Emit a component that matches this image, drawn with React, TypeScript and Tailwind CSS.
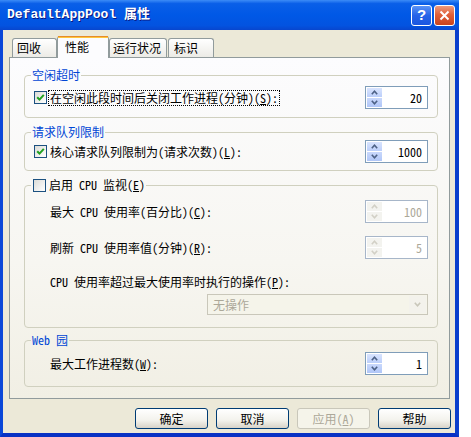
import type { ReactNode } from "react";

// ── XP Luna palette ─────────────────────────────────────────────────────────
const GROUP_LABEL = "text-[#0046D5]";

function CheckBox({ checked }: { checked?: boolean }) {
  return (
    <span className="flex h-[13px] w-[13px] shrink-0 items-center justify-center border border-[#1C5180] bg-[linear-gradient(135deg,#DCDCD7_0%,#FFFFFF_100%)]">
      {checked && (
        <svg width="9" height="9" viewBox="0 0 9 9">
          <path d="M1.2 4.2 L3.5 6.6 L7.8 1.8" fill="none" stroke="#21A121" strokeWidth="2" />
        </svg>
      )}
    </span>
  );
}

function Arrow({ up, color }: { up?: boolean; color: string }) {
  return (
    <svg width="7" height="5" viewBox="0 0 7 5">
      <path d={up ? "M0.8 4.2 L3.5 1.2 L6.2 4.2" : "M0.8 0.8 L3.5 3.8 L6.2 0.8"} fill="none" stroke={color} strokeWidth="1.6" />
    </svg>
  );
}

function Spinner({ value, disabled }: { value: string; disabled?: boolean }) {
  return (
    <div
      className={
        disabled
          ? "ml-auto flex h-[23px] w-[63px] shrink-0 border border-[#A7B6C9] bg-white p-[1px] text-[#ACA899]"
          : "ml-auto flex h-[23px] w-[63px] shrink-0 border border-[#7F9DB9] bg-white p-[1px] text-black"
      }
    >
      <div className="flex w-[15px] flex-col gap-[1px]">
        <div className={disabled ? "flex flex-1 items-center justify-center bg-[#F3F3EF]" : "flex flex-1 items-center justify-center bg-[linear-gradient(180deg,#D9E4FE_0%,#BCCFFA_100%)]"}>
          <Arrow up color={disabled ? "#D2D0C6" : "#4D6185"} />
        </div>
        <div className={disabled ? "flex flex-1 items-center justify-center bg-[#F3F3EF]" : "flex flex-1 items-center justify-center bg-[linear-gradient(180deg,#C9D8FC_0%,#B0C6F7_100%)]"}>
          <Arrow color={disabled ? "#D2D0C6" : "#4D6185"} />
        </div>
      </div>
      <div className="flex-1 pr-[4px] text-right leading-[19px]">{value}</div>
    </div>
  );
}

function Group({ legend, className, children }: { legend: ReactNode; className: string; children: ReactNode }) {
  return (
    <fieldset className={`ml-[14px] w-[414px] rounded-[4px] border border-[#D0D0BF] px-[9px] ${className}`}>
      <legend className="-ml-[3px] px-[1px] leading-[14px]">{legend}</legend>
      {children}
    </fieldset>
  );
}

function Button({ children, disabled }: { children: ReactNode; disabled?: boolean }) {
  return (
    <button
      className={
        disabled
          ? "flex h-[21px] w-[73px] items-center justify-center rounded-[3px] border border-[#C9C7BA] bg-[#F5F4EA] text-[#ACA899]"
          : "flex h-[21px] w-[73px] items-center justify-center rounded-[3px] border border-[#003C74] bg-[linear-gradient(180deg,#FFFFFF_0%,#F3F2EC_60%,#D8D3C8_100%)] text-black"
      }
    >
      {children}
    </button>
  );
}

export default function App() {
  return (
    <div className="flex h-[437px] w-[471px] bg-white font-['Noto_Sans_Mono_CJK_SC','Noto_Sans_CJK_SC',sans-serif] text-[12px] text-black">
      <div className="flex w-[459px] flex-col">
        {/* ── Title bar ── */}
        <div className="flex h-[30px] shrink-0 items-center bg-[linear-gradient(180deg,#3C8CF7_0%,#0A5FE8_12%,#0058E6_50%,#0353E0_85%,#0846CE_100%)] pl-[7px] pr-[4px]">
          <span className="font-['Liberation_Mono','Noto_Sans_CJK_SC',monospace] text-[13px] font-bold text-white [text-shadow:1px_1px_#0A1883]">
            DefaultAppPool 属性
          </span>
          <div className="ml-auto flex gap-[2px]">
            <div className="flex h-[21px] w-[21px] items-center justify-center rounded-[3px] border border-white bg-[linear-gradient(180deg,#5A93F6_0%,#2563E8_50%,#1A56E0_100%)] font-['Liberation_Sans',sans-serif] text-[15px] font-bold text-white">
              ?
            </div>
            <div className="flex h-[21px] w-[21px] items-center justify-center rounded-[3px] border border-white bg-[linear-gradient(180deg,#EE9A7C_0%,#E0603A_45%,#C8421C_100%)]">
              <svg width="11" height="11" viewBox="0 0 11 11">
                <path d="M1.5 1.5 L9.5 9.5 M9.5 1.5 L1.5 9.5" stroke="white" strokeWidth="2" />
              </svg>
            </div>
          </div>
        </div>

        {/* ── Dialog body ── */}
        <div className="flex flex-1 flex-col border-b-[4px] border-l-[3px] border-r-[4px] border-b-[#0831C4] border-l-[#0A47D8] border-r-[#0A3FCC] bg-[#ECE9D8] pt-[6px]">
          {/* Tabs */}
          <div className="relative z-10 -mb-[1px] ml-[9px] flex h-[22px] items-end">
            <div className="mb-[1px] flex h-[19px] w-[45px] items-center rounded-t-[3px] border border-b-0 border-[#919B9C] bg-[linear-gradient(180deg,#FFFFFF_0%,#ECEBE6_100%)] pl-[4px]">回收</div>
            <div className="flex h-[22px] w-[52px] flex-col rounded-t-[3px] border-x border-[#919B9C] bg-[#FCFCFE]">
              <div className="h-[1px] bg-[#E68B2C]" />
              <div className="h-[2px] bg-[#FFC73C]" />
              <div className="flex flex-1 items-center pb-[2px] pl-[7px]">性能</div>
            </div>
            <div className="mb-[1px] flex h-[19px] w-[58px] items-center rounded-t-[3px] border border-b-0 border-[#919B9C] bg-[linear-gradient(180deg,#FFFFFF_0%,#ECEBE6_100%)] pl-[3px]">运行状况</div>
            <div className="mb-[1px] ml-[1px] flex h-[19px] w-[46px] items-center rounded-t-[3px] border border-b-0 border-[#919B9C] bg-[linear-gradient(180deg,#FFFFFF_0%,#ECEBE6_100%)] pl-[5px]">标识</div>
          </div>

          {/* Tab panel */}
          <div className="ml-[6px] flex h-[342px] w-[441px] flex-col border border-[#919B9C] bg-[linear-gradient(180deg,#FCFCFE_0%,#F7F6F1_60%,#F1EFE4_100%)]">
            <Group legend={<span className={GROUP_LABEL}>空闲超时</span>} className="mt-[10px] pb-[8px] pt-[4px]">
              <div className="flex h-[23px] items-center">
                <CheckBox checked />
                <span className="ml-[1px] border border-dotted border-black px-[1px] leading-[14px]">
                  在空闲此段时间后关闭工作进程(分钟)(<u>S</u>):
                </span>
                <Spinner value="20" />
              </div>
            </Group>

            <Group legend={<span className={GROUP_LABEL}>请求队列限制</span>} className="mt-[7px] pb-[7px] pt-[1px]">
              <div className="flex h-[23px] items-center">
                <CheckBox checked />
                <span className="ml-[2px] pl-[1px]">
                  核心请求队列限制为(请求次数)(<u>L</u>):
                </span>
                <Spinner value="1000" />
              </div>
            </Group>

            <Group
              legend={
                <span className="flex items-center gap-[2px] pl-[1px]">
                  <CheckBox />
                  <span className="pl-[1px]">
                    启用 CPU 监视(<u>E</u>)
                  </span>
                </span>
              }
              className="mt-[7px] pb-[12px] pt-[8px]"
            >
              <div className="flex h-[23px] items-center pl-[16px]">
                <span>
                  最大 CPU 使用率(百分比)(<u>C</u>):
                </span>
                <Spinner value="100" disabled />
              </div>
              <div className="mt-[13px] flex h-[23px] items-center pl-[16px]">
                <span>
                  刷新 CPU 使用率值(分钟)(<u>R</u>):
                </span>
                <Spinner value="5" disabled />
              </div>
              <div className="mt-[16px] h-[14px] pl-[16px] leading-[14px]">
                CPU 使用率超过最大使用率时执行的操作(<u>P</u>):
              </div>
              <div className="ml-auto mt-[5px] flex h-[21px] w-[221px] border border-[#C9C7BA] bg-[#F5F4EA] p-[1px] text-[#ACA899]">
                <span className="flex-1 pl-[4px] leading-[17px]">无操作</span>
                <div className="flex w-[17px] items-center justify-center bg-[#F3F2EC]">
                  <Arrow color="#C9C7BA" />
                </div>
              </div>
            </Group>

            <Group legend={<span className={GROUP_LABEL}>Web 园</span>} className="mt-[5px] pb-[11px] pt-[5px]">
              <div className="flex h-[23px] items-center pl-[16px]">
                <span>
                  最大工作进程数(<u>W</u>):
                </span>
                <Spinner value="1" />
              </div>
            </Group>
          </div>

          {/* Buttons */}
          <div className="mt-[9px] flex justify-end gap-[8px] pr-[4px]">
            <Button>确定</Button>
            <Button>取消</Button>
            <Button disabled>
              应用(<u>A</u>)
            </Button>
            <Button>帮助</Button>
          </div>
        </div>
      </div>
    </div>
  );
}
